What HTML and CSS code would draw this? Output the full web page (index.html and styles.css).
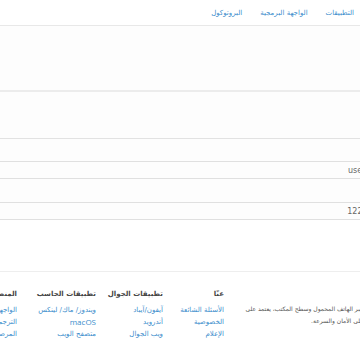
FILE: index.html
```html
<!DOCTYPE html>
<html lang="ar" dir="rtl">
<head>
<meta charset="utf-8">
<title>تيليجرام</title>
<link rel="stylesheet" href="styles.css">
</head>
<body>
<div class="page">
  <header class="header">
    <nav class="nav">
      <a href="#">التطبيقات</a>
      <a href="#">الواجهة البرمجية</a>
      <a href="#">البروتوكول</a>
    </nav>
  </header>
  <main class="main">
    <div class="title-bar"><h1 class="title">معلوماته:</h1></div>
    <div class="section"></div>
    <div class="field"><span class="value">username</span></div>
    <div class="field"><span class="value">12234567</span></div>
  </main>
  <footer class="footer">
    <div class="col about">
      <p>تطبيق سحابي عبر الهاتف المحمول وسطح المكتب، يعتمد على<br>التركيز بإمعان على الأمان والسرعة.</p>
    </div>
    <div class="col c1">
      <h4>عنّا</h4>
      <a href="#">الأسئلة الشائعة</a>
      <a href="#">الخصوصية</a>
      <a href="#">الإعلام</a>
    </div>
    <div class="col c2">
      <h4>تطبيقات الجوال</h4>
      <a href="#">آيفون/آيباد</a>
      <a href="#">أندرويد</a>
      <a href="#">ويب الجوال</a>
    </div>
    <div class="col c3">
      <h4>تطبيقات الحاسب</h4>
      <a href="#">ويندوز/ ماك/ لينكس</a>
      <a href="#" class="latin">macOS</a>
      <a href="#">متصفح الويب</a>
    </div>
    <div class="col c4">
      <h4>المنصة</h4>
      <a href="#">الواجهة البرمجية</a>
      <a href="#">الترجمة</a>
      <a href="#">المرصد</a>
    </div>
  </footer>
</div>
</body>
</html>
```
FILE: styles.css
```css
html, body {
  margin: 0;
  padding: 0;
  overflow: hidden;
  background: #fff;
}
body {
  font-family: "DejaVu Sans", "Noto Sans", sans-serif;
  color: #333;
}
.page {
  width: 520px;
  margin-right: -40px;
}
a {
  text-decoration: none;
  color: #3b8dcc;
}
.header {
  height: 25px;
  border-bottom: 1px solid #e8e8e8;
  display: flex;
  align-items: center;
}
.nav {
  display: flex;
  gap: 18px;
  padding-right: 46px;
  font-size: 7px;
}
.main {
  background: #fdfdfd;
}
.title-bar {
  height: 64px;
  border-bottom: 2px solid #ececec;
  display: flex;
  align-items: flex-end;
}
.title {
  margin: 0 0 4px 0;
  font-size: 8px;
  font-weight: bold;
  color: #444;
}
.section {
  height: 46px;
  border-bottom: 1px solid #e2e2e2;
}
.field {
  margin-top: 22px;
  height: 16px;
  border-top: 1px solid #e0e0e0;
  border-bottom: 1px solid #e0e0e0;
  display: flex;
  align-items: center;
  padding-right: 12px;
}
.field + .field {
  margin-top: 23px;
}
.value {
  font-size: 8px;
  color: #666;
}
.footer {
  margin-top: 51px;
  border-top: 1px solid #eeeeee;
  background: #fff;
  display: flex;
  padding-top: 17px;
  height: 80px;
}
.col {
  display: flex;
  flex-direction: column;
  font-size: 7px;
}
.col h4 {
  margin: 0 0 5px 0;
  font-size: 7px;
  font-weight: bold;
  color: #444;
  line-height: 10px;
}
.col a {
  line-height: 12px;
}
.latin {
  font-family: "Open Sans", sans-serif;
  font-size: 8px;
}
.about {
  width: 157px;
  margin-left: 19px;
  padding-top: 14px;
}
.about p {
  margin: 0;
  line-height: 12px;
  color: #555;
  font-size: 6px;
}
.c1 { width: 61px; }
.c2 { width: 67px; }
.c3 { width: 79px; }
.c4 { width: 80px; }
```
